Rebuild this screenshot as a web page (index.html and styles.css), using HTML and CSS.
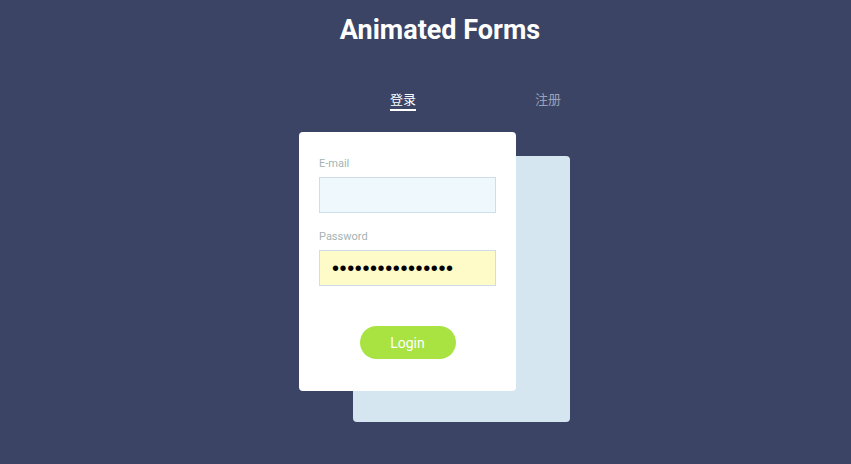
FILE: index.html
```html
<!DOCTYPE html>
<html lang="zh-CN">
<head>
    <meta charset="UTF-8">
    <meta name="viewport" content="width=device-width, initial-scale=1.0">
    <title>Animated Forms</title>
    <link rel="stylesheet" href="styles.css">
</head>
<body>

    <h1 class="title">Animated Forms</h1>

    <div class="page">
        <div class="tabs">
            <span class="tab active">登录</span>
            <span class="tab">注册</span>
        </div>

        <div class="cards">
            <div class="card-back"></div>
            <form class="card" onsubmit="return false">
                <label for="email">E-mail</label>
                <input type="email" id="email" class="field">

                <label for="password">Password</label>
                <input type="password" id="password" class="field filled" value="1234567890123456">

                <div class="actions">
                    <button type="submit" class="btn">Login</button>
                </div>
            </form>
        </div>
    </div>

</body>
</html>
```

FILE: styles.css
```css
body {
    margin: 0;
    background-color: #3b4465;
    font-family: Roboto, "Noto Sans CJK SC", sans-serif;
}
.title {
    margin: 0;
    padding: 15px 0 0 29px;
    font-size: 27px;
    line-height: 30px;
    font-weight: 700;
    color: #fff;
    text-align: center;
}
.page {
    width: 271px;
    margin: 0 auto;
    padding-left: 18px;
}
.tabs {
    display: flex;
    gap: 119px;
    margin-top: 44px;
    padding-left: 91px;
}
.tab {
    font-family: "Noto Sans CJK SC", sans-serif;
    font-size: 13px;
    line-height: 20px;
    color: #9ba1b4;
    border-bottom: 2px solid transparent;
}
.tab.active {
    color: #fff;
    border-bottom-color: #fff;
}
.cards {
    display: grid;
    margin-top: 21px;
}
.card-back,
.card {
    grid-area: 1 / 1;
    width: 217px;
    border-radius: 4px;
    box-sizing: border-box;
}
.card-back {
    height: 266px;
    margin: 24px 0 0 54px;
    background-color: #d6e6f0;
}
.card {
    position: relative;
    height: 259px;
    margin: 0;
    padding: 25px 20px 0;
    background-color: #fff;
}
.card label {
    display: block;
    font-size: 11px;
    line-height: 14px;
    color: #a3b4b4;
    margin-bottom: 6px;
}
.field {
    display: block;
    width: 100%;
    height: 36px;
    box-sizing: border-box;
    margin: 0 0 17px;
    padding: 0 12px;
    border: 1px solid #cfdceb;
    border-radius: 0;
    background-color: #eef8fd;
    font-family: "Liberation Sans", sans-serif;
    font-size: 13px;
    outline: none;
}
.field.filled {
    background-color: #fffbc8;
    color: #000;
    font-size: 20px;
    letter-spacing: 0.6px;
}
.actions {
    display: flex;
    justify-content: center;
    margin-top: 40px;
}
.btn {
    width: 96px;
    height: 33px;
    border: none;
    border-radius: 17px;
    background-color: #a8e342;
    color: #fff;
    font-family: Roboto, sans-serif;
    font-size: 14px;
    cursor: pointer;
}
```
